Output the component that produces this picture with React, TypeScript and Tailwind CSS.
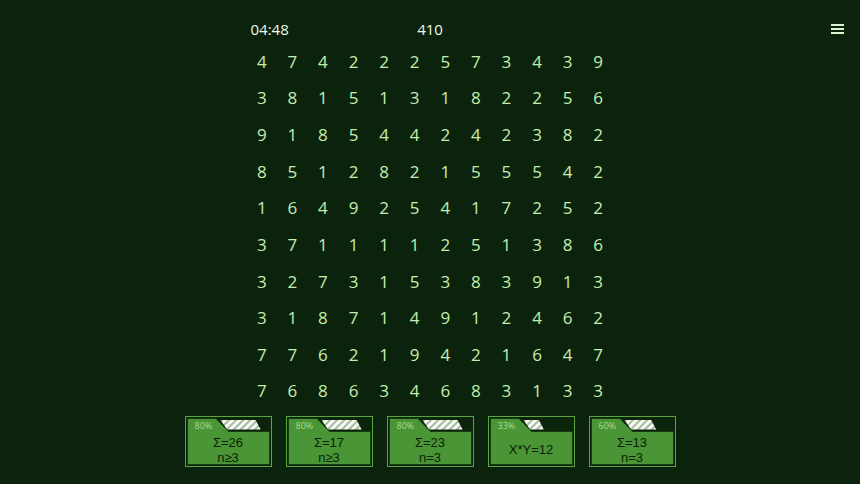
import React from 'react';

const rows = [
  '474222573439',
  '381513182256',
  '918544242382',
  '851282155542',
  '164925417252',
  '371111251386',
  '327315383913',
  '318714912462',
  '776219421647',
  '768634683133',
];

interface Goal {
  pct: number;
  lines: string[];
}

const goals: Goal[] = [
  { pct: 80, lines: ['Σ=26', 'n≥3'] },
  { pct: 80, lines: ['Σ=17', 'n≥3'] },
  { pct: 80, lines: ['Σ=23', 'n=3'] },
  { pct: 33, lines: ['X*Y=12'] },
  { pct: 60, lines: ['Σ=13', 'n=3'] },
];

function GoalCard({ goal, idx }: { goal: Goal; idx: number }) {
  const barEnd = 37 + (42 * goal.pct) / 100;
  return (
    <div className="relative w-[87px] h-[51px]">
      {/* frame drawing */}
      <svg className="absolute inset-0" width="87" height="51" viewBox="0 0 87 51">
        <defs>
          <pattern id={`hatch${idx}`} width="5" height="5" patternUnits="userSpaceOnUse" patternTransform="rotate(45)">
            <rect width="5" height="5" fill="#a9b8a4" />
            <rect width="3" height="5" fill="#f6fcf2" />
          </pattern>
        </defs>
        <rect x="0.5" y="0.5" width="86" height="50" fill="#0c240b" stroke="#5aa442" />
        <polygon points="2.5,2.5 31,2.5 43.5,15.5 84.5,15.5 84.5,48.5 2.5,48.5" fill="#4a9535" stroke="#173b10" />
        <polygon points={`35.5,4 ${barEnd},4 ${barEnd + 5},13.5 42,13.5`} fill={`url(#hatch${idx})`} />
      </svg>
      <span className="absolute left-[10px] top-[5px] text-[9px] leading-none text-[#a9dc94]">{goal.pct}%</span>
      <div
        className="absolute inset-x-0 top-[18px] bottom-[1px] flex flex-col items-center justify-center text-[#0a1f07] text-[13px] leading-[15px]"
        style={{ fontFamily: '"Liberation Sans", "DejaVu Sans", sans-serif' }}
      >
        {goal.lines.map((l) => (
          <div key={l}>{l}</div>
        ))}
      </div>
    </div>
  );
}

export default function App() {
  return (
    <div
      className="relative w-[860px] h-[484px] bg-[#0b230c] flex flex-col items-center overflow-hidden"
      style={{ fontFamily: '"Open Sans", "DejaVu Sans", sans-serif' }}
    >
      {/* menu */}
      <div className="absolute right-[16px] top-[24px] flex flex-col gap-[2px]">
        <div className="w-[13px] h-[2px] bg-[#dcf4d4]" />
        <div className="w-[13px] h-[2px] bg-[#dcf4d4]" />
        <div className="w-[13px] h-[2px] bg-[#dcf4d4]" />
      </div>

      <div className="relative w-[367px] h-[43px] shrink-0 text-[15px] font-medium text-[#eef8e8]">
        <span className="absolute left-[4px] top-[19px] leading-[20px]">04:48</span>
        <span className="absolute inset-x-0 top-[19px] leading-[20px] text-center">410</span>
      </div>

      <div className="grid grid-cols-12 w-[367px] shrink-0">
        {rows.map((r, ri) =>
          r.split('').map((d, ci) => (
            <div key={`${ri}-${ci}`} className="h-[36.67px] flex items-center justify-center text-[17px] font-medium text-[#c4eeae]">
              {d}
            </div>
          ))
        )}
      </div>

      <div className="flex gap-[14px] mt-[6px]">
        {goals.map((g, i) => (
          <GoalCard key={i} goal={g} idx={i} />
        ))}
      </div>
    </div>
  );
}
